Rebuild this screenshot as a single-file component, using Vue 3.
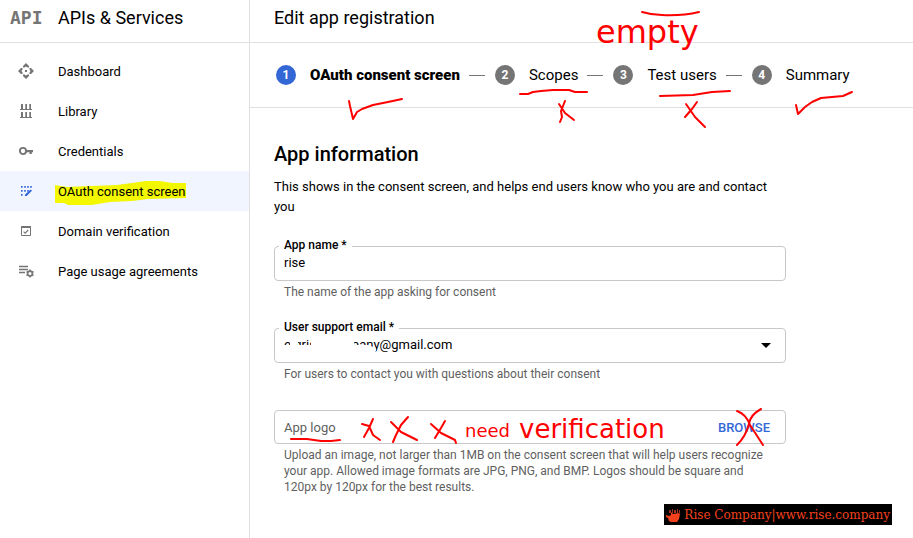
<template>
  <div class="console">
    <aside class="sidebar">
      <div class="sidebar-head">
        <span class="api-logo">API</span>
        <span class="product">APIs &amp; Services</span>
      </div>
      <nav class="nav">
        <a
          v-for="item in navItems"
          :key="item.id"
          href="#"
          class="nav-item"
          :class="{ 'nav-item--active': item.id === active }"
          @click.prevent="active = item.id"
        >
          <svg class="nav-icon" viewBox="0 0 18 18" aria-hidden="true">
            <g v-if="item.id === 'dashboard'" fill="currentColor">
              <path d="M9 1l3 3v1.500h-1.500L9 4.500 7.500 5.500H6V4z" />
              <path d="M9 17l3-3v-1.500h-1.500L9 13.500l-1.500-1H6V14z" />
              <path d="M1 9l3-3h1.500v1.500L4.500 9l1 1.500V12H4z" />
              <path d="M17 9l-3-3h-1.500v1.500l1 1.500-1 1.500V12H14z" />
              <path d="M8 8h2v2H8z" />
            </g>
            <path
              v-else-if="item.id === 'library'"
              fill="currentColor"
              d="M3 7h12v1H3zM4 2h2v5H4zM8.300 2h1.700v5H8.300zM12.300 2H14v5h-1.700zM3 15h12v1H3zM4 10h2v5H4zM8.300 10H10v5H8.300zM12.300 10H14v5h-1.700z"
            />
            <g v-else-if="item.id === 'credentials'">
              <circle cx="6" cy="9" r="3.100" fill="none" stroke="currentColor" stroke-width="1.900" />
              <path fill="currentColor" d="M9.500 8H16v2.200h-1.200V12h-2.300v-1.800h-3z" />
            </g>
            <g v-else-if="item.id === 'consent'" fill="currentColor">
              <path d="M4 4h1.600v1.800H4zM7.200 4h1.600v1.800H7.200zM10.200 4h1.600v1.800h-1.600zM13.200 4h1.600v1.800h-1.600zM4 8h1.600v1.800H4zM7.200 8h1.600v1.800H7.200zM10.200 8h1.600v1.800h-1.600zM4 12h1.600v1.800H4z" />
              <path d="M8 12.500l5.600-5 1.400 1.300L9.600 14H8z" />
            </g>
            <g v-else-if="item.id === 'domain'" fill="none" stroke="currentColor">
              <path d="M4.500 4.500h9v9h-9z" />
              <path d="M4 5h10" stroke-width="2" />
              <path d="M6.600 9.700l1.600 1.500 3-3.200" stroke-width="1.100" />
            </g>
            <g v-else fill="none" stroke="currentColor">
              <path d="M2 4.500h9M2 7.500h9M2 10.500h6" stroke-width="1.300" />
              <circle cx="13" cy="11.500" r="2.400" stroke-width="1.600" />
              <path d="M13 7.500v1.500M13 14v1.500M9.500 9.500l1.400.8M15.100 12.700l1.400.8M9.500 13.500l1.400-.8M15.100 10.300l1.400-.8" stroke-width="1.500" />
            </g>
          </svg>
          <span class="nav-label">
            <svg v-if="item.id === 'consent'" class="marker" viewBox="0 0 132 26" aria-hidden="true">
              <path fill="#f3f700" d="M1 4l12 2 50-2 15-2 14-2h14l12 2h14v15l-38 1-16 2-22 1-18 3H14l-4-2H1z" />
            </svg>
            <span class="nav-text">{{ item.label }}</span>
          </span>
        </a>
      </nav>
    </aside>

    <main class="main">
      <header class="page-head">
        <h1>Edit app registration</h1>
      </header>

      <ol class="stepper">
        <li v-for="(step, i) in steps" :key="step" class="step" :class="{ 'step--current': i === 0 }">
          <span class="step-num">{{ i + 1 }}</span>
          <span class="step-label">{{ step }}</span>
        </li>
      </ol>

      <form class="form" @submit.prevent>
        <h2>App information</h2>
        <p class="intro">This shows in the consent screen, and helps end users know who you are and contact you</p>

        <div class="field">
          <label for="app-name" class="float-label">App name *</label>
          <input id="app-name" v-model="appName" class="box" type="text">
          <p class="hint">The name of the app asking for consent</p>
        </div>

        <div class="field">
          <label for="email" class="float-label">User support email *</label>
          <select id="email" v-model="email" class="box">
            <option :value="email">{{ email }}</option>
          </select>
          <svg class="eraser" viewBox="0 0 98 20" aria-hidden="true">
            <path fill="#fff" d="M0 9h8V0h8v9h13V0h43v9h14l8 3v3l-4 5H0z" />
          </svg>
          <svg class="caret" viewBox="0 0 10 5" aria-hidden="true"><path d="M0 0h10L5 5z" /></svg>
          <p class="hint">For users to contact you with questions about their consent</p>
        </div>

        <div class="field">
          <div class="box logo-box">
            <span id="logo-label">App logo</span>
            <button type="button" class="browse" aria-describedby="logo-label">BROWSE</button>
          </div>
          <p class="hint">Upload an image, not larger than 1MB on the consent screen that will help users recognize your app. Allowed image formats are JPG, PNG, and BMP. Logos should be square and 120px by 120px for the best results.</p>
        </div>
      </form>
    </main>

    <!-- Red pen notes over the page -->
    <svg class="notes" width="913" height="538" viewBox="0 0 913 538">
      <path v-for="d in strokes" :key="d" :d="d" />
      <text x="596" y="43" class="note-lg">empty</text>
      <text x="465" y="437" class="note-sm">need</text>
      <text x="519" y="438" class="note-md">verification</text>
    </svg>

    <div class="banner">
      <svg class="hand" viewBox="0 0 14 16" aria-hidden="true">
        <path d="M0 8l3 1 2-1V5l2 2 6-1 1 1-1 5-2 3H5l-2-1-1-3-2-1z" />
        <path class="fingers" d="M3 3h2v3H3zM6 2h1v4H6zM8 3h2v3H8zM11 2h1v4h-1zM13 3h1v3h-1z" />
      </svg>
      <span>Rise Company|www.rise.company</span>
    </div>
  </div>
</template>

<script setup>
import { ref } from 'vue'

const navItems = [
  { id: 'dashboard', label: 'Dashboard' },
  { id: 'library', label: 'Library' },
  { id: 'credentials', label: 'Credentials' },
  { id: 'consent', label: 'OAuth consent screen' },
  { id: 'domain', label: 'Domain verification' },
  { id: 'usage', label: 'Page usage agreements' },
]
const active = ref('consent')

const steps = ['OAuth consent screen', 'Scopes', 'Test users', 'Summary']

const appName = ref('rise')
const email = ref('e.grise.company@gmail.com')

const strokes = [
  // steps: tick, cross, cross, tick
  'M349 101l1 5 3 13 4-7 5-3 11-4 15-3 14-3',
  'M520 94l8 0 5-2 8-1 12-1h16l6 2h12',
  'M565 101l-4 10 1 6-2 5M559 104l6 9 9 7',
  'M642 12q10 3 20 3 20 1 37-3',
  'M660 96l33-1 19-3 18-1',
  'M697 102l-5 7-7 8M686 104l9 13 10 10',
  'M796 105l2 9 7-7 7-5 9-4 22-2 9-4',
  // app logo row
  'M291 439l16 0 14 2h10l9-1',
  'M373 419l-4 9-5 9M362 424l7 2 4 9 7 5',
  'M408 417l-7 8-5 10-3 7M391 422l10 10 16 8',
  'M445 421l-4 7-6 10M431 424l10 9 14 7 1 3',
  'M761 409q-11 6-12 15-3 12-12 21M737 411q9 3 13 14l13 20',
]
</script>

<style>
body {
  margin: 0;
  background: #fff;
}
</style>

<style scoped>
.console {
  position: relative;
  display: flex;
  min-height: 100vh;
  overflow: hidden;
  font-family: Roboto, 'Liberation Sans', sans-serif;
  font-size: 13px;
  color: #000;
}

.sidebar {
  width: 249px;
  flex-shrink: 0;
  border-right: 1px solid #e0e0e0;
}
.sidebar-head {
  display: flex;
  align-items: center;
  box-sizing: border-box;
  height: 43px;
  padding: 0 10px 8px;
  gap: 15px;
  border-bottom: 1px solid #e0e0e0;
}
.api-logo {
  width: 33px;
  font-family: 'DejaVu Sans Mono', monospace;
  font-size: 18px;
  font-weight: 700;
  color: #757575;
}
.product { font-size: 18px; }

.nav { padding-top: 8px; }
.nav-item {
  display: flex;
  align-items: center;
  gap: 23px;
  height: 40px;
  padding-left: 17px;
  color: #000;
  text-decoration: none;
}
.nav-item--active { background: #f0f5ff; }
.nav-icon {
  width: 18px;
  height: 18px;
  color: #757575;
}
.nav-item--active .nav-icon { color: #3367d6; }
.nav-label { position: relative; }
.nav-text { position: relative; }
.marker {
  position: absolute;
  left: -4px;
  top: -3px;
  width: 132px;
  height: 26px;
}

.main {
  flex: 1;
  min-width: 0;
}
.page-head {
  display: flex;
  align-items: center;
  box-sizing: border-box;
  height: 43px;
  padding: 0 24px 8px;
  border-bottom: 1px solid #e0e0e0;
}
h1 {
  margin: 0;
  font-size: 18px;
  font-weight: 400;
}

.stepper {
  display: flex;
  align-items: center;
  height: 64px;
  margin: 0;
  padding: 0 26px;
  border-bottom: 1px solid #e0e0e0;
  list-style: none;
  font-size: 15px;
}
.step {
  display: flex;
  align-items: center;
  white-space: nowrap;
}
.step:not(:last-child)::after {
  content: '';
  width: 16px;
  height: 1px;
  margin: 0 10px 0 9px;
  background: #757575;
}
.step-num {
  width: 20px;
  margin-right: 14px;
  border-radius: 50%;
  background: #757575;
  color: #fff;
  font-size: 12px;
  font-weight: 700;
  line-height: 20px;
  text-align: center;
}
.step--current .step-num { background: #3367d6; }
.step--current .step-label { font-weight: 900; }

.form {
  max-width: 512px;
  padding: 34px 24px 0;
}
h2 {
  margin: 0 0 11px;
  font-size: 20px;
  font-weight: 500;
  line-height: 24px;
}
.intro {
  margin: 0 0 29px;
  line-height: 20px;
}

.field {
  position: relative;
  margin-bottom: 28px;
}
.float-label {
  position: absolute;
  left: 5px;
  top: -9px;
  padding: 0 5px;
  background: #fff;
  font-size: 12px;
  font-weight: 500;
  line-height: 16px;
}
.box {
  display: block;
  box-sizing: border-box;
  width: 100%;
  height: 35px;
  padding: 0 9px 2px;
  border: 1px solid #c8c8c8;
  border-radius: 4px;
  background: #fff;
  color: #000;
  font: inherit;
  appearance: none;
}
.logo-box {
  display: flex;
  align-items: center;
  justify-content: space-between;
  height: 34px;
  padding: 0 15px 0 9px;
  color: #5f5f5f;
}
.browse {
  padding: 0;
  border: 0;
  background: none;
  color: #3367d6;
  font: inherit;
  font-weight: 500;
}
.hint {
  margin: 3px 10px 0;
  color: #5f5f5f;
  font-size: 12px;
  line-height: 16px;
}
.eraser {
  position: absolute;
  left: 8px;
  top: 8px;
  width: 98px;
  height: 20px;
}
.caret {
  position: absolute;
  right: 15px;
  top: 15px;
  width: 10px;
  height: 5px;
}

.notes {
  position: absolute;
  left: 0;
  top: 0;
  pointer-events: none;
}
.notes path {
  fill: none;
  stroke: #f00;
  stroke-width: 2;
  stroke-linecap: round;
  stroke-linejoin: round;
}
.notes text {
  fill: #f00;
  font-family: 'DejaVu Sans', sans-serif;
}
.note-lg { font-size: 32px; }
.note-md { font-size: 26px; }
.note-sm { font-size: 18px; }

.banner {
  position: absolute;
  right: 21px;
  bottom: 13px;
  display: flex;
  align-items: center;
  gap: 4px;
  height: 21px;
  padding: 0 2px;
  background: #000;
  color: #f4401c;
  font-family: 'DejaVu Serif', serif;
  font-size: 12px;
}
.hand {
  width: 14px;
  height: 16px;
  fill: #f4401c;
}
.fingers { fill: #a03020; }
</style>
